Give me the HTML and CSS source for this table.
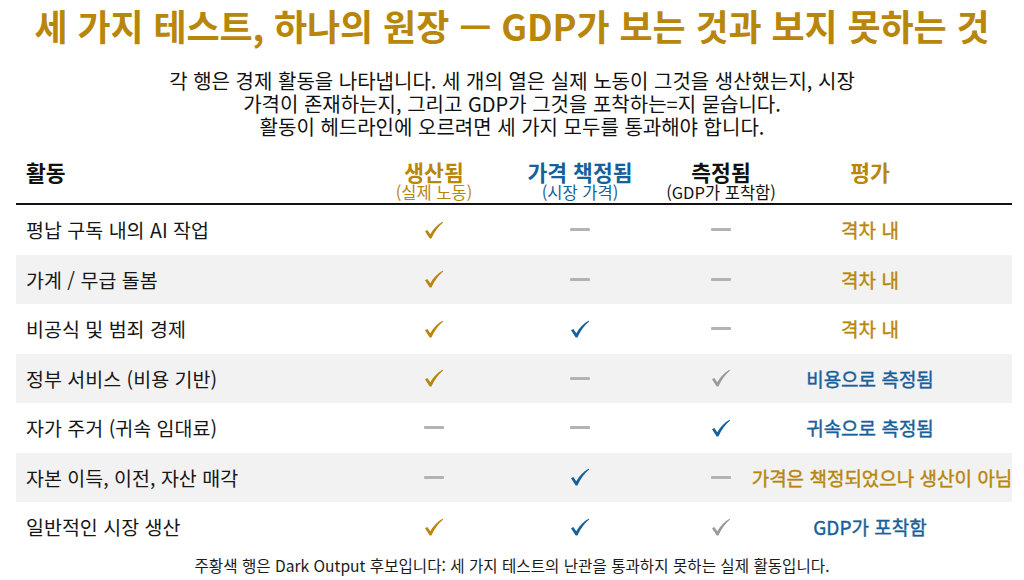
FILE: index.html
```html
<!DOCTYPE html>
<html lang="ko">
<head>
<meta charset="utf-8">
<title>세 가지 테스트, 하나의 원장</title>
<link rel="stylesheet" href="styles.css">
</head>
<body>
<svg width="0" height="0" class="defs" aria-hidden="true">
  <defs>
    <path id="chk" d="M1 10.2 L3.3 9 L6.3 13.3 C9.5 7.8 13.5 3.6 18.6 0.8 L19.2 1.5 C14.6 5.2 10.6 10.6 7.4 17.5 L5.7 17.5 Z"/>
  </defs>
</svg>
<main class="page">
  <h1 class="title">세 가지 테스트, 하나의 원장 — GDP가 보는 것과 보지 못하는 것</h1>
  <p class="lede">각 행은 경제 활동을 나타냅니다. 세 개의 열은 실제 노동이 그것을 생산했는지, 시장<br>가격이 존재하는지, 그리고 GDP가 그것을 포착하는=지 묻습니다.<br>활동이 헤드라인에 오르려면 세 가지 모두를 통과해야 합니다.</p>

  <div class="table">
    <div class="thead">
      <div class="th th-act"><span class="th-main">활동</span></div>
      <div class="th gold"><span class="th-main">생산됨</span><span class="th-sub">(실제 노동)</span></div>
      <div class="th blue"><span class="th-main">가격 책정됨</span><span class="th-sub">(시장 가격)</span></div>
      <div class="th dark"><span class="th-main">측정됨</span><span class="th-sub">(GDP가 포착함)</span></div>
      <div class="th th-eval gold"><span class="th-main">평가</span></div>
    </div>

    <div class="row">
      <div class="cell act">평납 구독 내의 AI 작업</div>
      <div class="cell"><svg class="check c-gold" viewBox="0 0 20 18"><use href="#chk"/></svg></div>
      <div class="cell"><span class="dash"></span></div>
      <div class="cell"><span class="dash"></span></div>
      <div class="cell eval gold">격차 내</div>
    </div>
    <div class="row alt">
      <div class="cell act">가계 / 무급 돌봄</div>
      <div class="cell"><svg class="check c-gold" viewBox="0 0 20 18"><use href="#chk"/></svg></div>
      <div class="cell"><span class="dash"></span></div>
      <div class="cell"><span class="dash"></span></div>
      <div class="cell eval gold">격차 내</div>
    </div>
    <div class="row">
      <div class="cell act">비공식 및 범죄 경제</div>
      <div class="cell"><svg class="check c-gold" viewBox="0 0 20 18"><use href="#chk"/></svg></div>
      <div class="cell"><svg class="check c-blue" viewBox="0 0 20 18"><use href="#chk"/></svg></div>
      <div class="cell"><span class="dash"></span></div>
      <div class="cell eval gold">격차 내</div>
    </div>
    <div class="row alt">
      <div class="cell act">정부 서비스 (비용 기반)</div>
      <div class="cell"><svg class="check c-gold" viewBox="0 0 20 18"><use href="#chk"/></svg></div>
      <div class="cell"><span class="dash"></span></div>
      <div class="cell"><svg class="check c-gray" viewBox="0 0 20 18"><use href="#chk"/></svg></div>
      <div class="cell eval blue">비용으로 측정됨</div>
    </div>
    <div class="row">
      <div class="cell act">자가 주거 (귀속 임대료)</div>
      <div class="cell"><span class="dash"></span></div>
      <div class="cell"><span class="dash"></span></div>
      <div class="cell"><svg class="check c-blue" viewBox="0 0 20 18"><use href="#chk"/></svg></div>
      <div class="cell eval blue">귀속으로 측정됨</div>
    </div>
    <div class="row alt">
      <div class="cell act">자본 이득, 이전, 자산 매각</div>
      <div class="cell"><span class="dash"></span></div>
      <div class="cell"><svg class="check c-blue" viewBox="0 0 20 18"><use href="#chk"/></svg></div>
      <div class="cell"><span class="dash"></span></div>
      <div class="cell eval gold"><span class="wide">가격은 책정되었으나 생산이 아님</span></div>
    </div>
    <div class="row">
      <div class="cell act">일반적인 시장 생산</div>
      <div class="cell"><svg class="check c-gold" viewBox="0 0 20 18"><use href="#chk"/></svg></div>
      <div class="cell"><svg class="check c-blue" viewBox="0 0 20 18"><use href="#chk"/></svg></div>
      <div class="cell"><svg class="check c-gray" viewBox="0 0 20 18"><use href="#chk"/></svg></div>
      <div class="cell eval blue">GDP가 포착함</div>
    </div>
  </div>

  <p class="foot">주황색 행은 Dark Output 후보입니다: 세 가지 테스트의 난관을 통과하지 못하는 실제 활동입니다.</p>
</main>
</body>
</html>
```

FILE: styles.css
```css
html, body {
  margin: 0;
  padding: 0;
  background: #ffffff;
}

body {
  font-family: "Noto Sans CJK KR", "Noto Sans", "Liberation Sans", sans-serif;
  color: #141414;
}

.defs {
  position: absolute;
  width: 0;
  height: 0;
  overflow: hidden;
}

.page {
  width: 1024px;
  height: 580px;
  overflow: hidden;
}

.title {
  margin: 0;
  padding-top: 4px;
  font-size: 36px;
  line-height: 43px;
  font-weight: 700;
  text-align: center;
  color: #b8860b;
  letter-spacing: -0.1px;
  white-space: nowrap;
}

.lede {
  margin: 22px 0 0;
  font-size: 20px;
  line-height: 23px;
  text-align: center;
  color: #111111;
}

.table {
  margin: 23px 0 0 16px;
  width: 996px;
}

.thead,
.row {
  display: grid;
  grid-template-columns: 346px 144px 148px 134px 224px;
}

.thead {
  align-items: start;
  padding-bottom: 2px;
  border-bottom: 2px solid #111111;
}

.th {
  display: flex;
  flex-direction: column;
  align-items: center;
  white-space: nowrap;
}

.th-main {
  font-size: 21.5px;
  line-height: 22px;
  font-weight: 700;
}

.th-sub {
  font-size: 16.5px;
  line-height: 18px;
}

.th-act {
  align-items: flex-start;
  padding-left: 10px;
  color: #111111;
}

.th-eval {
  padding-right: 60px;
}

.row {
  height: 49.5px;
}

.row.alt {
  background: #f2f2f2;
}

.cell {
  display: flex;
  align-items: center;
  justify-content: center;
  white-space: nowrap;
  font-size: 19px;
}

.cell.act {
  justify-content: flex-start;
  padding-left: 10px;
  font-size: 19.5px;
  color: #161616;
}

.cell.eval {
  padding-right: 60px;
  font-weight: 400;
  -webkit-text-stroke: 0.4px currentColor;
}

.wide {
  padding-left: 24px;
}

.gold { color: #b8860b; }
.blue { color: #17609a; }
.dark { color: #111111; }

.check {
  width: 20px;
  height: 18px;
}

.c-gold { fill: #b8860b; }
.c-blue { fill: #15609a; }
.c-gray { fill: #9a9a9a; }

.dash {
  display: block;
  width: 20px;
  height: 3px;
  border-radius: 1px;
  background: #b3b3b3;
}

.foot {
  margin: 3px 0 0;
  font-size: 15.6px;
  line-height: 20px;
  text-align: center;
  color: #1a1a1a;
}
```
